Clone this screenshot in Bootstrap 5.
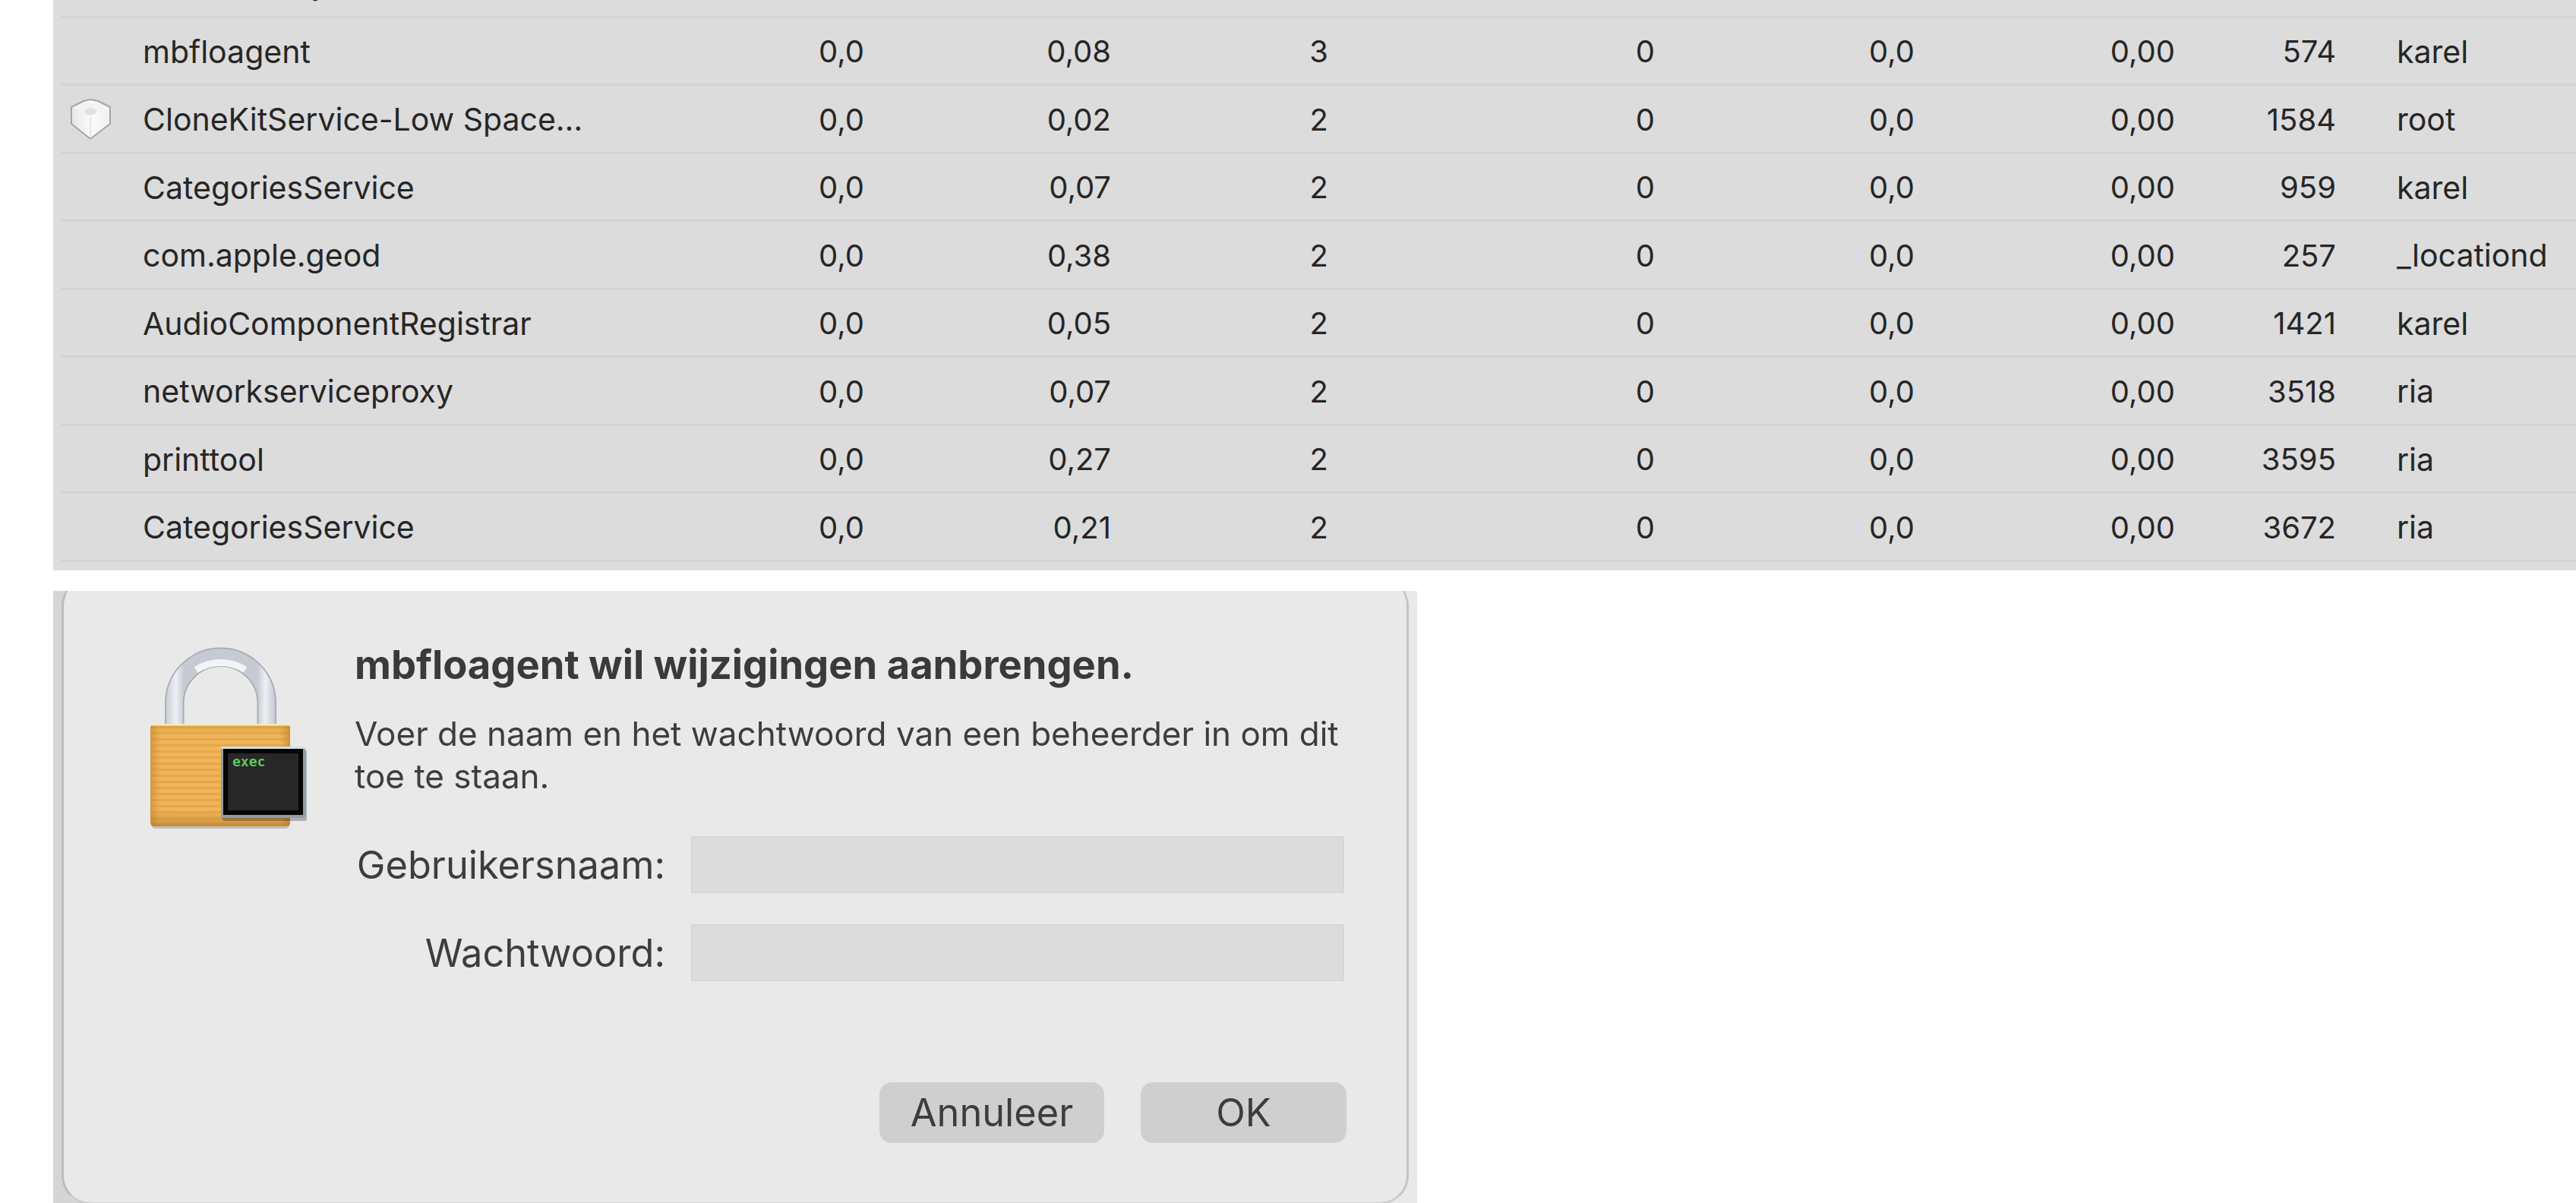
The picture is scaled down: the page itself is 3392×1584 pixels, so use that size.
<!DOCTYPE html>
<html lang="nl">
<head>
<meta charset="utf-8">
<title>Activiteitenweergave</title>
<link href="https://cdn.jsdelivr.net/npm/bootstrap@5.3.0/dist/css/bootstrap.min.css" rel="stylesheet">
<style>
html,body{width:3392px;height:1584px;overflow:hidden;background:#fff;}
body{font-family:Inter,"Liberation Sans",sans-serif;color:#262626;}
.page-blur{filter:blur(.6px);}
.proc-table{margin-left:70px;height:751px;background:#dcdcdc;overflow:hidden;font-size:40px;}
.proc-list{margin-top:-66px;padding-left:11px;}
.proc-row{height:89.5px;border-bottom:3px solid #d3d3d3;white-space:nowrap;padding-top:3px;}
.c-icon{width:107px;padding-left:11px;margin-top:-1px;}
.c-name{width:701px;font-size:41px;}
.c-cpu{width:249px;}.c-time{width:325px;}.c-thr{width:286px;}.c-wake{width:430px;}
.c-gpu{width:342px;}.c-gput{width:343px;}.c-pid{width:212px;}
.c-user{margin-left:80px;font-size:41px;}
.sheet-wrap{margin:27px 0 0 70px;width:1796px;height:806px;overflow:hidden;background:linear-gradient(90deg,#d5d5d5 0 50%,#e9e9e9 50% 100%);padding:0 11px 0 11px;}
.sheet{margin-top:-18px;height:826px;background:#e9e9e9;border:solid #bcbcbc;border-width:0 3px 3px 3px;border-right-color:#c4c4c4;border-bottom-color:#cdcdcd;border-radius:38px;padding:87px 83px 0 114px;color:#3d3d3d;}
.lock-col{width:269px;flex:none;padding-top:5px;}
.form-col{width:1306px;}
.sheet-title{font-size:52.5px;font-weight:700;line-height:56px;margin:0 0 35px;color:#3a3a3a;white-space:nowrap;}
.sheet-text{font-size:44px;line-height:56px;margin:0 0 51px;}
.cred-row{height:75px;margin-bottom:41px;}
.cred-label{width:409px;text-align:right;font-size:50.5px;margin:0 34px 0 0;padding:0;color:#3d3d3d;white-space:nowrap;}
.cred-input.form-control{width:860px;height:75px;background:#dcdcdc;border:2px solid #d6d6d6;border-radius:0;flex:none;}
.sheet-actions{margin-top:133px;width:1306px;gap:48px;}
.sheet-btn.btn{height:80px;background:#cfcfcf;border:0;border-radius:16px;font-size:50.5px;line-height:80px;padding:0;color:#3d3d3d;}
.btn-cancel{width:296px;}.btn-ok{width:271px;}
</style>
</head>
<body>
<div class="page-blur">
<div class="proc-table">
<div class="proc-list">
<div class="proc-row d-flex align-items-center"><div class="c-icon"></div><div class="c-name">AccessibilityUIServer</div><div class="c-cpu text-end">0,0</div><div class="c-time text-end">0,11</div><div class="c-thr text-end">3</div><div class="c-wake text-end">0</div><div class="c-gpu text-end">0,0</div><div class="c-gput text-end">0,00</div><div class="c-pid text-end">601</div><div class="c-user">karel</div></div>
<div class="proc-row d-flex align-items-center"><div class="c-icon"></div><div class="c-name">mbfloagent</div><div class="c-cpu text-end">0,0</div><div class="c-time text-end">0,08</div><div class="c-thr text-end">3</div><div class="c-wake text-end">0</div><div class="c-gpu text-end">0,0</div><div class="c-gput text-end">0,00</div><div class="c-pid text-end">574</div><div class="c-user">karel</div></div>
<div class="proc-row d-flex align-items-center"><div class="c-icon"><svg class="d-block" width="55" height="54" viewBox="0 0 55 54"><defs><linearGradient id="cubeG" x1="0" y1="0" x2="1" y2="0"><stop offset="0" stop-color="#e6e6e6"/><stop offset=".5" stop-color="#fbfbfb"/><stop offset="1" stop-color="#f0f0f0"/></linearGradient></defs><path d="M27 1 L37 3 L53 11 L53 33 L28 52 L26 52 L2 33 L2 11 L18 3 Z" fill="url(#cubeG)" stroke="#a6a6a6" stroke-width="2" stroke-linejoin="round"/><path d="M4 12 L27 22 L51 12 L37 5 L18 5 Z" fill="#f4f4f4"/><ellipse cx="27" cy="17" rx="8" ry="5" fill="#e2e2e2"/><path d="M27 24 V50" stroke="#e8e8e8" stroke-width="2"/></svg></div><div class="c-name">CloneKitService-Low Space…</div><div class="c-cpu text-end">0,0</div><div class="c-time text-end">0,02</div><div class="c-thr text-end">2</div><div class="c-wake text-end">0</div><div class="c-gpu text-end">0,0</div><div class="c-gput text-end">0,00</div><div class="c-pid text-end">1584</div><div class="c-user">root</div></div>
<div class="proc-row d-flex align-items-center"><div class="c-icon"></div><div class="c-name">CategoriesService</div><div class="c-cpu text-end">0,0</div><div class="c-time text-end">0,07</div><div class="c-thr text-end">2</div><div class="c-wake text-end">0</div><div class="c-gpu text-end">0,0</div><div class="c-gput text-end">0,00</div><div class="c-pid text-end">959</div><div class="c-user">karel</div></div>
<div class="proc-row d-flex align-items-center"><div class="c-icon"></div><div class="c-name">com.apple.geod</div><div class="c-cpu text-end">0,0</div><div class="c-time text-end">0,38</div><div class="c-thr text-end">2</div><div class="c-wake text-end">0</div><div class="c-gpu text-end">0,0</div><div class="c-gput text-end">0,00</div><div class="c-pid text-end">257</div><div class="c-user">_locationd</div></div>
<div class="proc-row d-flex align-items-center"><div class="c-icon"></div><div class="c-name">AudioComponentRegistrar</div><div class="c-cpu text-end">0,0</div><div class="c-time text-end">0,05</div><div class="c-thr text-end">2</div><div class="c-wake text-end">0</div><div class="c-gpu text-end">0,0</div><div class="c-gput text-end">0,00</div><div class="c-pid text-end">1421</div><div class="c-user">karel</div></div>
<div class="proc-row d-flex align-items-center"><div class="c-icon"></div><div class="c-name">networkserviceproxy</div><div class="c-cpu text-end">0,0</div><div class="c-time text-end">0,07</div><div class="c-thr text-end">2</div><div class="c-wake text-end">0</div><div class="c-gpu text-end">0,0</div><div class="c-gput text-end">0,00</div><div class="c-pid text-end">3518</div><div class="c-user">ria</div></div>
<div class="proc-row d-flex align-items-center"><div class="c-icon"></div><div class="c-name">printtool</div><div class="c-cpu text-end">0,0</div><div class="c-time text-end">0,27</div><div class="c-thr text-end">2</div><div class="c-wake text-end">0</div><div class="c-gpu text-end">0,0</div><div class="c-gput text-end">0,00</div><div class="c-pid text-end">3595</div><div class="c-user">ria</div></div>
<div class="proc-row d-flex align-items-center"><div class="c-icon"></div><div class="c-name">CategoriesService</div><div class="c-cpu text-end">0,0</div><div class="c-time text-end">0,21</div><div class="c-thr text-end">2</div><div class="c-wake text-end">0</div><div class="c-gpu text-end">0,0</div><div class="c-gput text-end">0,00</div><div class="c-pid text-end">3672</div><div class="c-user">ria</div></div>
</div>
</div>
<div class="sheet-wrap">
<div class="sheet d-flex">
<div class="lock-col">
<svg class="d-block" width="210" height="242" viewBox="0 0 210 242">
<defs>
<linearGradient id="shk" gradientUnits="userSpaceOnUse" x1="19" y1="0" x2="166" y2="0"><stop offset="0" stop-color="#c5cad2"/><stop offset=".1" stop-color="#eef0f3"/><stop offset=".17" stop-color="#c6cbd3"/><stop offset=".83" stop-color="#c6cbd3"/><stop offset=".9" stop-color="#eef0f3"/><stop offset="1" stop-color="#bfc4cc"/></linearGradient>
<linearGradient id="bodyH" x1="0" y1="0" x2="1" y2="0"><stop offset="0" stop-color="#d4983f"/><stop offset=".07" stop-color="#f0b556"/><stop offset=".93" stop-color="#f0b556"/><stop offset="1" stop-color="#cf9238"/></linearGradient>
<linearGradient id="bodyV" x1="0" y1="0" x2="0" y2="1"><stop offset="0" stop-color="#c98f3f" stop-opacity=".35"/><stop offset=".12" stop-color="#c98f3f" stop-opacity="0"/><stop offset=".85" stop-color="#b97f2e" stop-opacity="0"/><stop offset="1" stop-color="#b0752a" stop-opacity=".6"/></linearGradient>
<pattern id="stripes" patternUnits="userSpaceOnUse" width="8" height="8"><rect width="8" height="3" fill="#c98c38" fill-opacity=".3"/></pattern>
</defs>
<path d="M31.75 102 V74 A60.75 60.75 0 0 1 153.25 74 V102" fill="none" stroke="#a7acb5" stroke-width="25.5"/>
<path d="M31.75 102 V74 A60.75 60.75 0 0 1 153.25 74 V102" fill="none" stroke="url(#shk)" stroke-width="22"/>
<path d="M60 30 A60 60 0 0 1 125 30" fill="none" stroke="#f3f4f6" stroke-width="9"/>
<rect x="1" y="103" width="183" height="136" rx="6" fill="#000" fill-opacity=".18"/>
<rect x="0" y="101" width="184" height="135" rx="5" fill="url(#bodyH)"/>
<rect x="0" y="103" width="184" height="133" rx="5" fill="url(#stripes)"/>
<rect x="0" y="101" width="184" height="135" rx="5" fill="url(#bodyV)"/>
<rect x="1" y="101" width="182" height="2.5" fill="#fce7b7"/>
<rect x="95" y="135" width="111" height="94" rx="3" fill="#000" fill-opacity=".25"/>
<rect x="93" y="131" width="111" height="94" rx="3" fill="#8f9ca5"/>
<rect x="93" y="131" width="111" height="3" fill="#cfe0ea"/>
<rect x="96" y="134" width="105" height="87" fill="#050505"/>
<rect x="102" y="140" width="93" height="75" fill="#272727"/>
<text x="108" y="157" font-family="'DejaVu Sans Mono','Liberation Mono',monospace" font-size="18" font-weight="700" fill="#5fc562">exec</text>
</svg>
</div>
<div class="form-col">
<h1 class="sheet-title">mbfloagent wil wijzigingen aanbrengen.</h1>
<p class="sheet-text">Voer de naam en het wachtwoord van een beheerder in om dit toe te staan.</p>
<div class="cred-row d-flex align-items-center"><label class="cred-label" for="uname">Gebruikersnaam:</label><input id="uname" class="cred-input form-control" type="text"></div>
<div class="cred-row d-flex align-items-center"><label class="cred-label" for="pword">Wachtwoord:</label><input id="pword" class="cred-input form-control" type="password"></div>
<div class="sheet-actions d-flex justify-content-end"><button class="sheet-btn btn btn-cancel" type="button">Annuleer</button><button class="sheet-btn btn btn-ok" type="button">OK</button></div>
</div>
</div>
</div>
</div>
</body>
</html>
